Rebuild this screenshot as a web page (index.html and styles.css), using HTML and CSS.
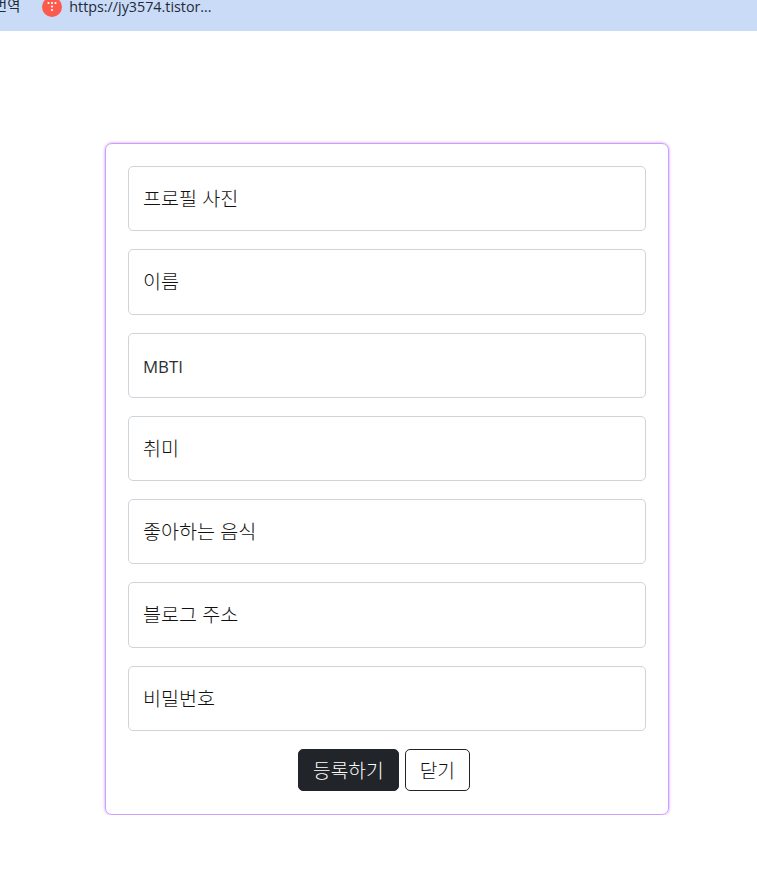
FILE: index.html
```html
<!DOCTYPE html>
<html lang="ko">

<head>
    <meta charset="UTF-8">
    <meta name="viewport" content="width=device-width, initial-scale=1.0">
    <title>방명록 등록</title>
    <link rel="stylesheet" href="styles.css">
</head>

<body>

    <div class="bookmarks">
        <span class="bookmark-cut">번역</span>
        <svg class="bookmark-icon" width="20" height="20" viewBox="0 0 20 20">
            <circle cx="10" cy="10" r="10" fill="#fb5a4c" />
            <g fill="#fff">
                <circle cx="6.5" cy="6" r="1.1" />
                <circle cx="10" cy="6" r="1.1" />
                <circle cx="13.5" cy="6" r="1.1" />
                <circle cx="10" cy="9.5" r="1.1" />
                <circle cx="10" cy="13" r="1.1" />
            </g>
        </svg>
        <span class="bookmark-url">https://jy3574.tistor...</span>
    </div>

    <form class="card">
        <input class="field" type="text" placeholder="프로필 사진">
        <input class="field" type="text" placeholder="이름">
        <input class="field field-latin" type="text" placeholder="MBTI">
        <input class="field" type="text" placeholder="취미">
        <input class="field" type="text" placeholder="좋아하는 음식">
        <input class="field" type="text" placeholder="블로그 주소">
        <input class="field" type="text" placeholder="비밀번호">

        <div class="buttons">
            <button class="btn btn-dark" type="button">등록하기</button>
            <button class="btn btn-line" type="button">닫기</button>
        </div>
    </form>

</body>

</html>
```

FILE: styles.css
```css
* {
    margin: 0;
    padding: 0;
    box-sizing: border-box;
}

body {
    font-family: "Open Sans", "Noto Sans CJK KR", sans-serif;
    color: #212529;
    background-color: #fff;
}

.bookmarks {
    height: 31px;
    display: flex;
    align-items: flex-start;
    overflow: hidden;
    background-color: #c9dbf6;
    font-size: 14.3px;
    line-height: 20px;
}

.bookmark-cut {
    margin: -4px 0 0 -6px;
    color: #1f2a3a;
}

.bookmark-icon {
    margin: -3px 0 0 22px;
}

.bookmark-url {
    margin: -3px 0 0 7px;
    color: #1f2a3a;
}

.card {
    width: 564px;
    height: 672px;
    margin: 112px 0 0 105px;
    padding: 22px;
    border: 1px solid #cf9dfc;
    border-radius: 7px;
    box-shadow: 0 0 3px #c58cff;
}

.field {
    display: block;
    width: 100%;
    height: 65.25px;
    margin-bottom: 18px;
    padding: 0 14px;
    border: 1px solid #ced4da;
    border-radius: 5px;
    font-family: inherit;
    font-size: 19.6px;
    font-weight: 300;
    color: #111;
    outline: none;
}

.field::placeholder {
    color: #111;
    opacity: 1;
}

.field-latin {
    padding-top: 2px;
    font-size: 16.8px;
    font-weight: 400;
}

.field-latin::placeholder {
    color: #2b2f33;
}

.buttons {
    display: flex;
    justify-content: center;
}

.btn {
    height: 42px;
    margin-right: 6px;
    padding: 0 14px;
    border: 1px solid #212529;
    border-radius: 5px;
    font-family: inherit;
    font-size: 19.2px;
    font-weight: 300;
}

.btn-dark {
    background-color: #212529;
    color: #fff;
}

.btn-line {
    background-color: #fff;
    color: #111;
}
```
